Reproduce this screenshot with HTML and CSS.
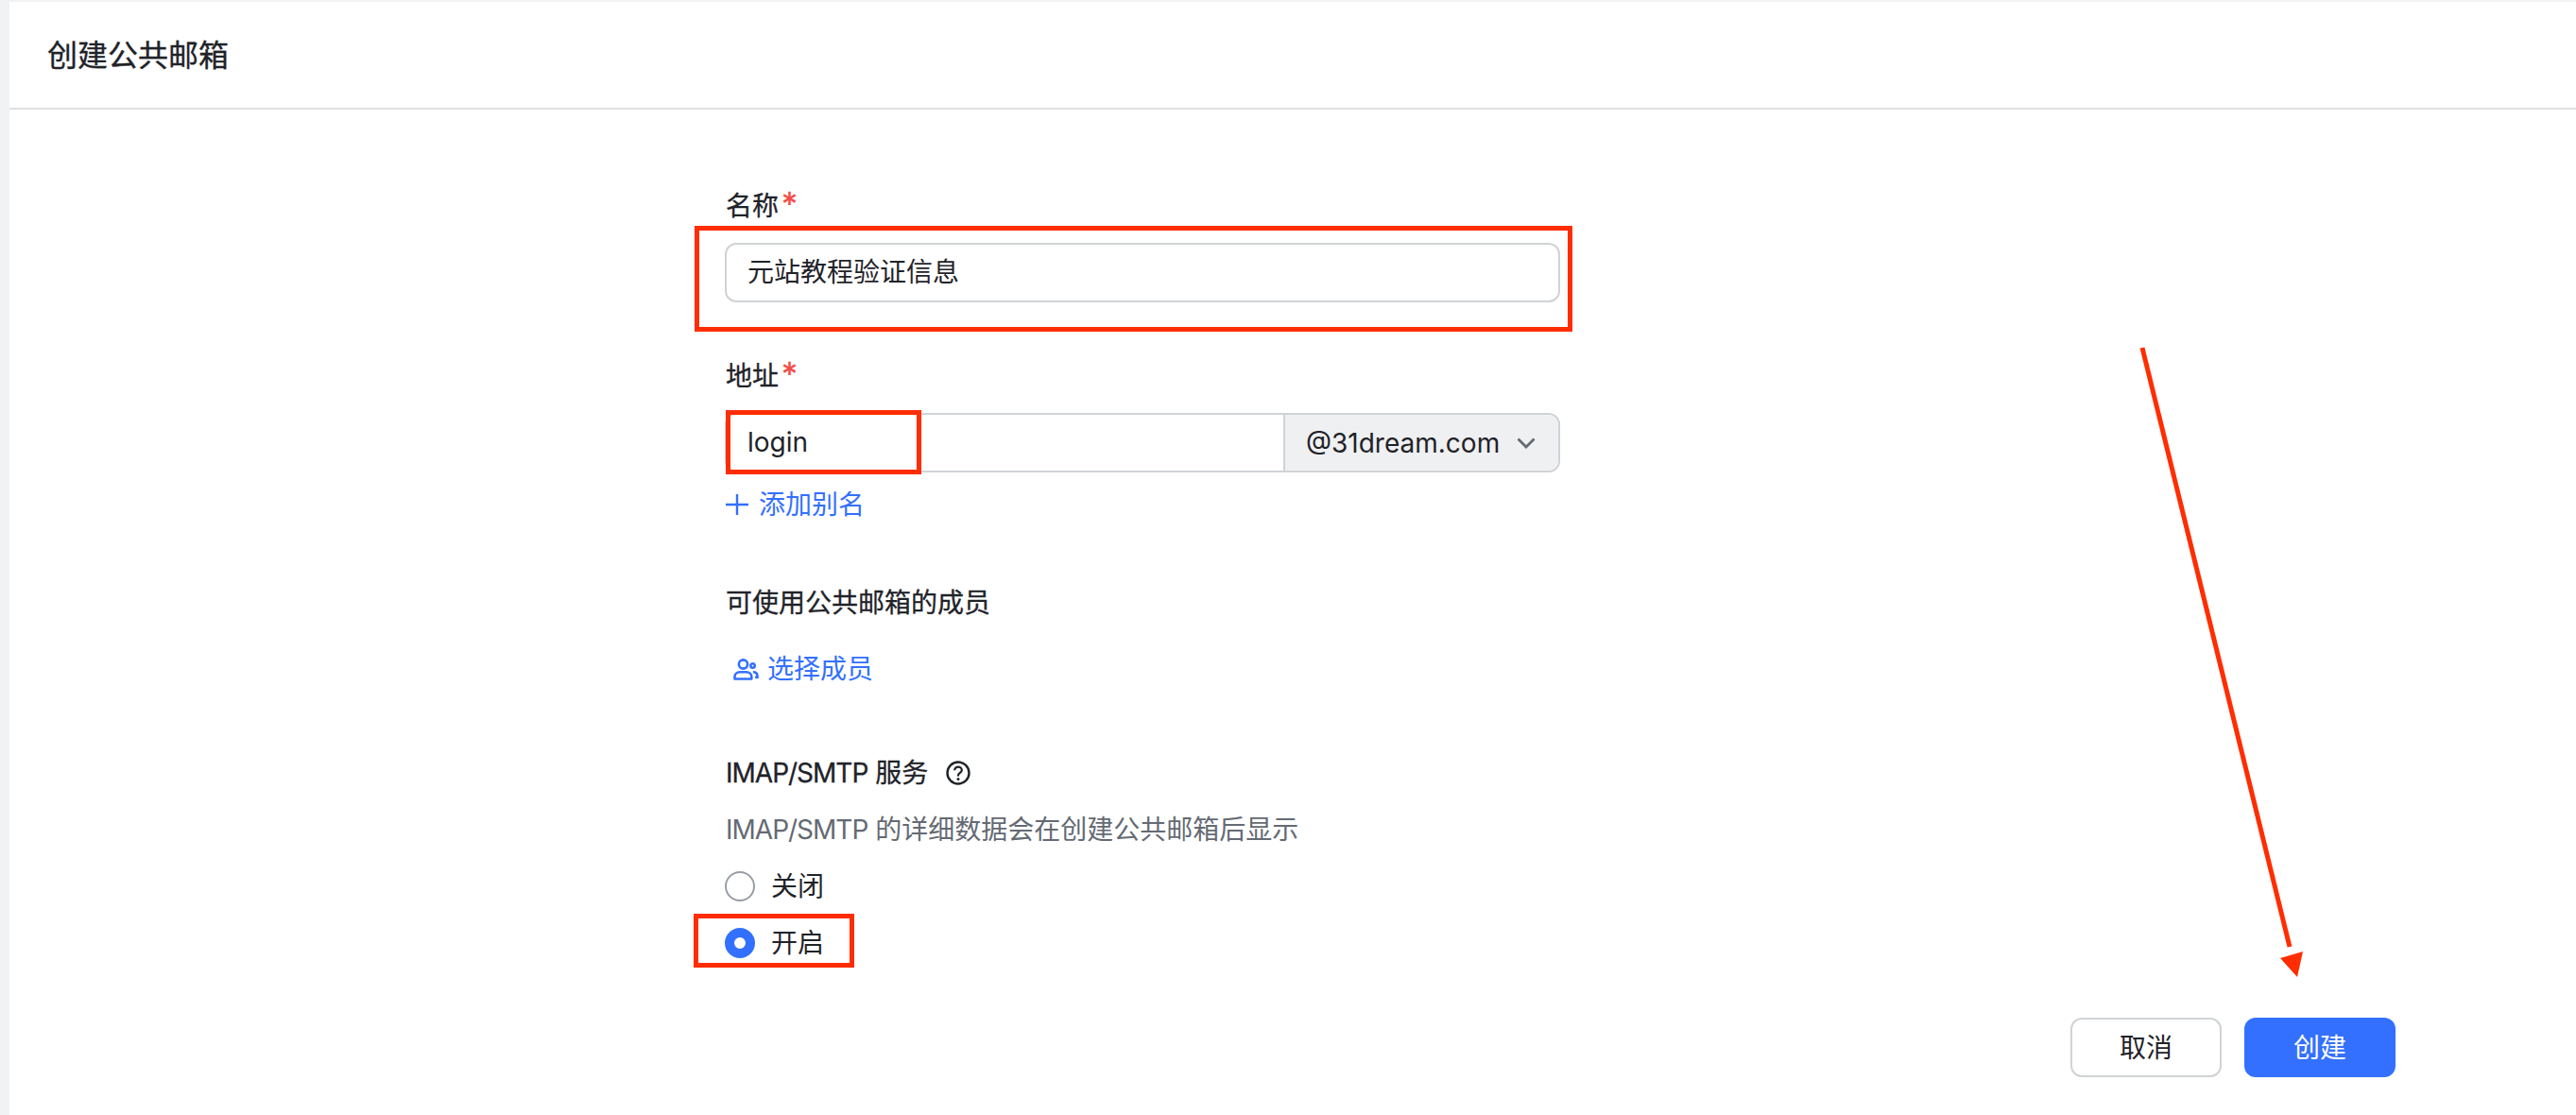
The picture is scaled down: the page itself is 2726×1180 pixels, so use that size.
FILE: index.html
```html
<!DOCTYPE html>
<html lang="zh-CN">
<head>
<meta charset="utf-8">
<title>创建公共邮箱</title>
<link rel="stylesheet" href="styles.css">
</head>
<body>
<div class="page">
  <header class="header">创建公共邮箱</header>
  <main class="content">
    <form class="form">
      <div class="label label-first">名称<span class="required">*</span></div>
      <div class="field text-field">元站教程验证信息</div>

      <div class="label label-address">地址<span class="required">*</span></div>
      <div class="field address-field">
        <div class="address-input">login</div>
        <div class="domain-select">
          <span>@31dream.com</span>
          <svg class="chevron" viewBox="0 0 20 12" width="20" height="12"><path d="M1.5 1.5l8.5 8.5 8.5-8.5" fill="none" stroke="#646a73" stroke-width="2.8"/></svg>
        </div>
      </div>
      <div class="link link-alias">
        <svg class="plus" viewBox="0 0 24 24" width="24" height="24"><path d="M12 1v22M0 12h24" fill="none" stroke="#3370ff" stroke-width="2.4"/></svg>
        <span>添加别名</span>
      </div>

      <div class="label label-members">可使用公共邮箱的成员</div>
      <div class="link link-members">
        <svg class="users" viewBox="0 0 27 23" width="27" height="23" fill="none" stroke="#3370ff" stroke-width="2.6">
          <circle cx="10.5" cy="6" r="4.6"/>
          <path d="M1.5 21.5v-2.2c0-3 2.4-5 5.4-5h7c3 0 5.4 2 5.4 5v2.2z" stroke-linejoin="round"/>
          <circle cx="20.5" cy="7.5" r="2.2"/>
          <path d="M21 14.2c2.6 0 4.5 1.6 4.5 4.2v1.4h-2.4"/>
        </svg>
        <span>选择成员</span>
      </div>

      <div class="label label-imap">
        <span><span class="caps">IMAP/SMTP</span> 服务</span>
        <svg class="help" viewBox="0 0 26 26" width="26" height="26" fill="none" stroke="#1f2329" stroke-width="2.4">
          <circle cx="13" cy="13" r="11.5"/>
          <path d="M9.2 10.2c0-2.2 1.7-3.6 3.8-3.6s3.8 1.4 3.8 3.4c0 2.8-3.8 2.9-3.8 5.6v.8" stroke-width="2.2"/>
          <circle cx="13" cy="19.6" r="1.5" fill="#1f2329" stroke="none"/>
        </svg>
      </div>
      <div class="hint"><span class="caps">IMAP/SMTP</span> 的详细数据会在创建公共邮箱后显示</div>
      <div class="radio-row radio-row-first"><span class="radio"></span><span>关闭</span></div>
      <div class="radio-row"><span class="radio radio-on"></span><span>开启</span></div>
    </form>
    <footer class="actions">
      <div class="btn btn-cancel">取消</div>
      <div class="btn btn-create">创建</div>
    </footer>
  </main>

  <div class="mark mark-name"></div>
  <div class="mark mark-login"></div>
  <div class="mark mark-open"></div>
  <svg class="arrow" viewBox="0 0 200 700" width="200" height="700">
    <path d="M7 8L163 642" fill="none" stroke="#ff2d00" stroke-width="5"/>
    <path d="M171 674L153 654L177 647z" fill="#ff2d00"/>
  </svg>
</div>
</body>
</html>
```
FILE: styles.css
```css
* {
  box-sizing: border-box;
}

html, body {
  margin: 0;
  padding: 0;
}

body {
  font-family: "Inter", "Noto Sans CJK SC", sans-serif;
  font-size: 28px;
  line-height: 40px;
  color: #1f2329;
}

.page {
  position: relative;
  width: 2726px;
  height: 1180px;
  padding: 2px 0 0 10px;
  background: #f1f2f4;
  display: flex;
  flex-direction: column;
  overflow: hidden;
}

.header {
  flex: none;
  height: 114px;
  padding: 2px 0 0 40px;
  display: flex;
  align-items: center;
  background: #fff;
  border-bottom: 2px solid #dfe0e2;
  font-size: 32px;
  -webkit-text-stroke: 0.35px #1f2329;
}

.content {
  flex: 1;
  background: #fff;
  padding: 82px 191px 0 758px;
}

.form {
  width: 882px;
}

.label {
  height: 40px;
  -webkit-text-stroke: 0.3px #1f2329;
}

.caps {
  letter-spacing: -1px;
}

.required {
  margin-left: 3px;
  font-size: 34px;
  line-height: 28px;
  color: #f54a45;
  -webkit-text-stroke: 0.3px #f54a45;
}

.field {
  height: 63px;
  border: 2px solid #d0d3d6;
  border-radius: 12px;
  margin: 19px -1px 0;
}

.text-field {
  padding: 9px 22px;
}

.label-address {
  margin-top: 58px;
}

.address-field {
  display: flex;
  overflow: hidden;
}

.address-input {
  flex: 1;
  padding: 9px 22px;
}

.domain-select {
  flex: none;
  width: 291px;
  display: flex;
  align-items: center;
  justify-content: space-between;
  padding: 0 24px 0 22px;
  background: #eff0f1;
  border-left: 2px solid #d0d3d6;
}

.chevron {
  display: block;
}

.link {
  height: 40px;
  display: flex;
  align-items: center;
  color: #3370ff;
}

.link-alias {
  margin-top: 14px;
  gap: 11px;
}

.plus,
.users,
.help {
  flex: none;
  display: block;
}

.label-members {
  margin-top: 64px;
}

.link-members {
  margin-top: 30px;
  padding-left: 8px;
  gap: 9px;
}

.label-imap {
  margin-top: 70px;
  display: flex;
  align-items: center;
  gap: 19px;
}

.hint {
  margin-top: 20px;
  height: 40px;
  color: #646a73;
}

.radio-row {
  margin: 20px 0 0 -1px;
  height: 40px;
  display: flex;
  align-items: center;
  gap: 17px;
}

.radio {
  flex: none;
  width: 32px;
  height: 32px;
  border-radius: 50%;
  border: 2px solid #989ea6;
  background: #fff;
}

.radio-on {
  border: 10px solid #3370ff;
}

.actions {
  margin-top: 59px;
  display: flex;
  justify-content: flex-end;
  gap: 24px;
}

.btn {
  width: 160px;
  height: 63px;
  border-radius: 12px;
  display: flex;
  align-items: center;
  justify-content: center;
}

.btn-cancel {
  border: 2px solid #d0d3d6;
  background: #fff;
}

.btn-create {
  background: #3370ff;
  color: #fff;
}

/* Red annotations drawn over the screenshot */
.mark {
  position: absolute;
  border: 5px solid #ff2d00;
}

.mark-name {
  left: 735px;
  top: 239px;
  width: 929px;
  height: 112px;
}

.mark-login {
  left: 768px;
  top: 434px;
  width: 207px;
  height: 68px;
}

.mark-open {
  left: 734px;
  top: 967px;
  width: 170px;
  height: 57px;
}

.arrow {
  position: absolute;
  left: 2260px;
  top: 360px;
}
```
